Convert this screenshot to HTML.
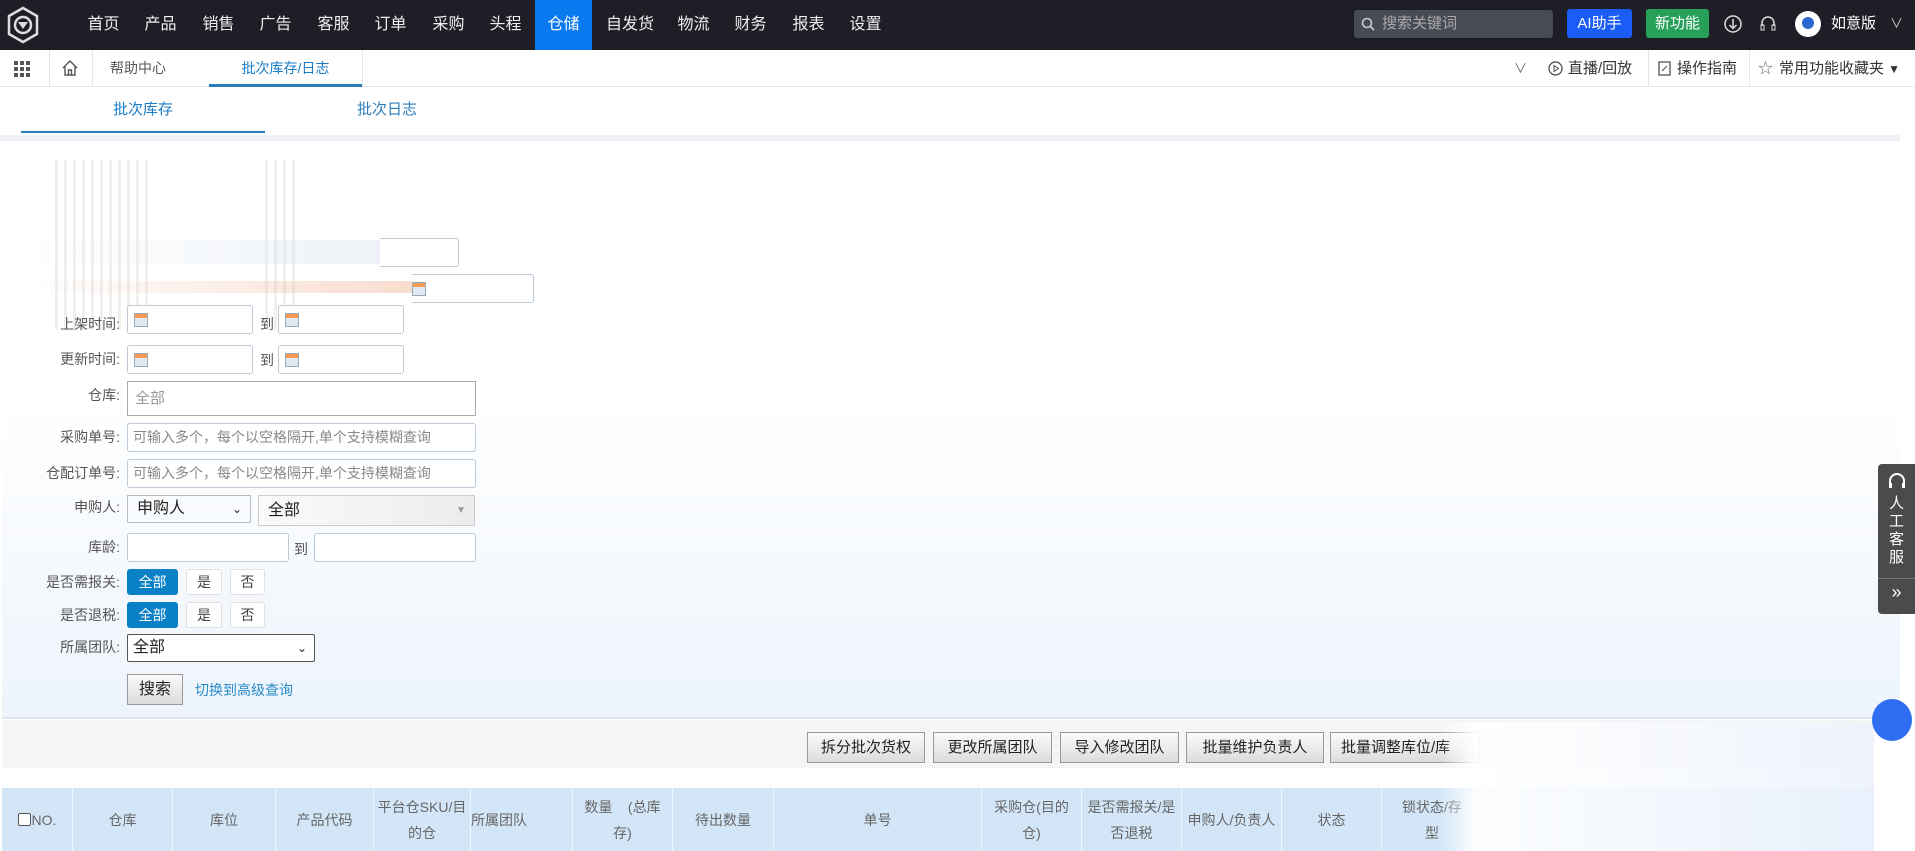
<!DOCTYPE html>
<html><head><meta charset="utf-8"><style>
*{box-sizing:border-box;margin:0;padding:0}
body{width:1915px;height:851px;overflow:hidden;position:relative;font-family:"Liberation Sans","Noto Sans CJK SC",sans-serif;background:#fff;color:#333}
.abs{position:absolute}
.top{left:0;top:0;width:1915px;height:50px;background:#1e1f26}
.nav{top:0;height:50px;line-height:50px;color:#eee;font-size:16px;text-align:center;width:57px}
.bar2{left:0;top:50px;width:1915px;height:37px;border-bottom:1px solid #e5e5e5;background:#fff;font-size:14px}
.lbl{font-size:14px;color:#555;text-align:right;width:120px;left:0}
.inp{border:1px solid #bcc9d6;border-radius:3px;background:#fff;height:29px}
.tb{border:1px solid #e0e0e0;border-radius:3px;height:26px;line-height:24px;text-align:center;font-size:14px;background:#fff;color:#444}
.tb.on{background:#0a81c7;color:#fff;border-color:#0a81c7}
.btn{height:31px;line-height:29px;border:1px solid #999;background:linear-gradient(#fafafa,#dcdcdc);font-size:15px;text-align:center;color:#222}
.th{top:788px;height:63px;background:#d3e6f8;border-right:1px solid #eef5fc;color:#666;font-size:14px;display:flex;align-items:center;justify-content:center;text-align:center;line-height:26px}
.cal{display:inline-block;width:14px;height:14px;border:1px solid #9ab;background:linear-gradient(#f59a55 0 35%,#dfe8f0 35%);margin:7px 0 0 6px}
</style></head><body>
<div class="abs top"></div>
<svg class="abs" style="left:6px;top:6px" width="34" height="38" viewBox="0 0 34 38"><path d="M17 2 L31 10 V28 L17 36 L3 28 V10 Z" fill="none" stroke="#ddd" stroke-width="2.5"/><circle cx="17" cy="19" r="8" fill="none" stroke="#ddd" stroke-width="2.5"/><path d="M12 16 L22 16 L17 23Z" fill="#ddd"/></svg>
<div class="abs nav" style="left:75px">首页</div>
<div class="abs nav" style="left:132px">产品</div>
<div class="abs nav" style="left:190px">销售</div>
<div class="abs nav" style="left:247px">广告</div>
<div class="abs nav" style="left:305px">客服</div>
<div class="abs nav" style="left:362px">订单</div>
<div class="abs nav" style="left:420px">采购</div>
<div class="abs nav" style="left:477px">头程</div>
<div class="abs nav" style="left:535px;background:#0a79f0;color:#fff">仓储</div>
<div class="abs nav" style="left:597px;width:66px">自发货</div>
<div class="abs nav" style="left:665px">物流</div>
<div class="abs nav" style="left:722px">财务</div>
<div class="abs nav" style="left:780px">报表</div>
<div class="abs nav" style="left:837px">设置</div>
<div class="abs" style="left:1354px;top:10px;width:199px;height:28px;background:#484b55;border-radius:3px;color:#aaa;font-size:15px;line-height:28px;padding-left:28px">搜索关键词</div>
<svg class="abs" style="left:1361px;top:17px" width="14" height="14"><circle cx="6" cy="6" r="4.5" fill="none" stroke="#ccc" stroke-width="1.6"/><path d="M9.5 9.5 L13 13" stroke="#ccc" stroke-width="1.6"/></svg>
<div class="abs" style="left:1567px;top:9px;width:65px;height:29px;background:#1a5cf5;border-radius:3px;color:#fff;font-size:15px;line-height:29px;text-align:center">AI助手</div>
<div class="abs" style="left:1646px;top:9px;width:63px;height:29px;background:#27a05a;border-radius:3px;color:#fff;font-size:15px;line-height:29px;text-align:center">新功能</div>
<svg class="abs" style="left:1723px;top:14px" width="20" height="20"><circle cx="10" cy="10" r="8" fill="none" stroke="#ddd" stroke-width="1.5"/><path d="M10 5V14M6.5 11L10 14.5L13.5 11" fill="none" stroke="#ddd" stroke-width="1.5"/></svg>
<svg class="abs" style="left:1758px;top:14px" width="20" height="20"><path d="M4 12V9a6 6 0 0 1 12 0v3" fill="none" stroke="#ddd" stroke-width="1.5"/><rect x="3" y="11" width="3" height="5" fill="none" stroke="#ddd"/><rect x="14" y="11" width="3" height="5" fill="none" stroke="#ddd"/></svg>
<div class="abs" style="left:1795px;top:11px;width:26px;height:26px;border-radius:50%;background:#fff"><div style="margin:6px auto;width:12px;height:12px;border-radius:50%;background:#2a6ad0"></div></div>
<div class="abs" style="left:1831px;top:0;line-height:47px;color:#fff;font-size:15px">如意版</div>
<div class="abs" style="left:1890px;top:0;line-height:47px;color:#ccc;font-size:13px">∨</div>

<div class="abs bar2"></div>
<svg class="abs" style="left:14px;top:61px" width="16" height="16"><g fill="#555"><rect x="0" y="0" width="4" height="4"/><rect x="6" y="0" width="4" height="4"/><rect x="12" y="0" width="4" height="4"/><rect x="0" y="6" width="4" height="4"/><rect x="6" y="6" width="4" height="4"/><rect x="12" y="6" width="4" height="4"/><rect x="0" y="12" width="4" height="4"/><rect x="6" y="12" width="4" height="4"/><rect x="12" y="12" width="4" height="4"/></g></svg>
<div class="abs" style="left:49px;top:50px;width:1px;height:37px;background:#e5e5e5"></div>
<svg class="abs" style="left:61px;top:59px" width="18" height="18"><path d="M2 9L9 2L16 9M4 7V16H14V7M7.5 16V11H10.5V16" fill="none" stroke="#555" stroke-width="1.4"/></svg>
<div class="abs" style="left:92px;top:50px;width:1px;height:37px;background:#e5e5e5"></div>
<div class="abs" style="left:110px;top:50px;line-height:37px;font-size:14px;color:#555">帮助中心</div>
<div class="abs" style="left:209px;top:50px;width:153px;height:37px;line-height:37px;font-size:14px;color:#1a7dc8;text-align:center;border-bottom:3px solid #2a7db8">批次库存/日志</div>
<div class="abs" style="left:362px;top:50px;width:1px;height:37px;background:#e5e5e5"></div>
<div class="abs" style="left:1514px;top:50px;line-height:37px;font-size:13px;color:#666">∨</div>
<svg class="abs" style="left:1548px;top:61px" width="15" height="15"><circle cx="7.5" cy="7.5" r="6.5" fill="none" stroke="#444" stroke-width="1.2"/><path d="M6 4.5L10.5 7.5L6 10.5Z" fill="none" stroke="#444"/></svg>
<div class="abs" style="left:1568px;top:50px;line-height:37px;font-size:15px;color:#333">直播/回放</div>
<div class="abs" style="left:1648px;top:50px;width:1px;height:37px;background:#e5e5e5"></div>
<svg class="abs" style="left:1658px;top:61px" width="13" height="15"><rect x="1" y="1" width="11" height="13" fill="none" stroke="#444" stroke-width="1.2"/><path d="M4 10L9 5" stroke="#444"/></svg>
<div class="abs" style="left:1677px;top:50px;line-height:37px;font-size:15px;color:#333">操作指南</div>
<div class="abs" style="left:1749px;top:50px;width:1px;height:37px;background:#e5e5e5"></div>
<div class="abs" style="left:1758px;top:50px;line-height:37px;font-size:15px;color:#666">☆</div>
<div class="abs" style="left:1779px;top:50px;line-height:37px;font-size:15px;color:#333">常用功能收藏夹 <span style="font-size:12px">▼</span></div>

<div class="abs" style="left:21px;top:87px;width:244px;height:46px;line-height:46px;text-align:center;color:#1a7dc8;font-size:15px;border-bottom:2px solid #2a7db8">批次库存</div>
<div class="abs" style="left:290px;top:87px;width:194px;height:46px;line-height:46px;text-align:center;color:#2a7db8;font-size:15px">批次日志</div>
<div class="abs" style="left:0;top:135px;width:1900px;height:6px;background:#eef2f7"></div>

<div class="abs" style="left:2px;top:141px;width:1898px;height:576px;background:linear-gradient(#fff 0%,#fff 45%,#edf4fc 100%)"></div>
<div class="abs" style="left:2px;top:717px;width:1898px;height:2px;background:#dde6ee"></div>

<div class="abs" style="left:55px;top:160px;width:95px;height:170px;background:repeating-linear-gradient(90deg,rgba(150,150,150,.15) 0 3px,transparent 3px 9px)"></div>
<div class="abs" style="left:265px;top:160px;width:30px;height:170px;background:repeating-linear-gradient(90deg,rgba(150,150,150,.15) 0 3px,transparent 3px 9px)"></div>
<div class="abs inp" style="left:380px;top:238px;width:79px;height:29px;border-left:none;border-radius:0 3px 3px 0"></div>
<div class="abs" style="left:30px;top:240px;width:350px;height:24px;background:linear-gradient(90deg,transparent,rgba(220,230,240,.5))"></div>
<div class="abs inp" style="left:412px;top:274px;width:122px;height:29px;border-left:none;border-radius:0 3px 3px 0"><span class="cal" style="margin-left:0"></span></div>
<div class="abs" style="left:30px;top:281px;width:382px;height:12px;background:linear-gradient(90deg,transparent,rgba(240,180,150,.45))"></div>

<div class="abs lbl" style="top:314px">上架时间:</div>
<div class="abs inp" style="left:127px;top:305px;width:126px"><span class="cal"></span></div>
<div class="abs" style="left:260px;top:314px;font-size:14px;color:#555">到</div>
<div class="abs inp" style="left:278px;top:305px;width:126px"><span class="cal"></span></div>

<div class="abs lbl" style="top:349px">更新时间:</div>
<div class="abs inp" style="left:127px;top:345px;width:126px"><span class="cal"></span></div>
<div class="abs" style="left:260px;top:350px;font-size:14px;color:#555">到</div>
<div class="abs inp" style="left:278px;top:345px;width:126px"><span class="cal"></span></div>

<div class="abs lbl" style="top:385px">仓库:</div>
<div class="abs inp" style="left:127px;top:381px;width:349px;height:35px;border-color:#aaa;border-radius:0;line-height:33px;padding-left:7px;color:#999;font-size:15px">全部</div>

<div class="abs lbl" style="top:427px">采购单号:</div>
<div class="abs inp" style="left:127px;top:423px;width:349px;line-height:27px;padding-left:5px;color:#888;font-size:14px">可输入多个，每个以空格隔开,单个支持模糊查询</div>
<div class="abs lbl" style="top:463px">仓配订单号:</div>
<div class="abs inp" style="left:127px;top:459px;width:349px;line-height:27px;padding-left:5px;color:#888;font-size:14px">可输入多个，每个以空格隔开,单个支持模糊查询</div>

<div class="abs lbl" style="top:497px">申购人:</div>
<div class="abs" style="left:127px;top:495px;width:124px;height:28px;border:1px solid #bbb;line-height:26px;padding-left:9px;font-size:16px;color:#222">申购人<span style="position:absolute;right:8px;font-size:12px">⌄</span></div>
<div class="abs" style="left:258px;top:495px;width:217px;height:31px;border:1px solid #ccc;background:linear-gradient(90deg,#fafafa,#ececec);line-height:29px;padding-left:9px;font-size:16px;color:#222">全部<span style="position:absolute;right:8px;font-size:10px;color:#999">▼</span></div>

<div class="abs lbl" style="top:537px">库龄:</div>
<div class="abs inp" style="left:127px;top:533px;width:162px"></div>
<div class="abs" style="left:294px;top:539px;font-size:14px;color:#555">到</div>
<div class="abs inp" style="left:314px;top:533px;width:162px"></div>

<div class="abs lbl" style="top:572px">是否需报关:</div>
<div class="abs tb on" style="left:127px;top:569px;width:51px">全部</div>
<div class="abs tb" style="left:186px;top:569px;width:36px">是</div>
<div class="abs tb" style="left:230px;top:569px;width:35px">否</div>
<div class="abs lbl" style="top:605px">是否退税:</div>
<div class="abs tb on" style="left:127px;top:602px;width:51px">全部</div>
<div class="abs tb" style="left:186px;top:602px;width:36px">是</div>
<div class="abs tb" style="left:230px;top:602px;width:35px">否</div>

<div class="abs lbl" style="top:637px">所属团队:</div>
<div class="abs" style="left:127px;top:634px;width:188px;height:28px;border:1px solid #555;border-radius:2px;background:#fff;line-height:26px;padding-left:5px;font-size:16px;color:#222">全部<span style="position:absolute;right:7px;font-size:12px">⌄</span></div>

<div class="abs btn" style="left:127px;top:674px;width:56px;font-size:16px">搜索</div>
<div class="abs" style="left:195px;top:680px;font-size:14px;color:#2a8ac8">切换到高级查询</div>

<div class="abs" style="left:2px;top:720px;width:1898px;height:48px;background:#f5f5f5"></div>
<div class="abs btn" style="left:807px;top:732px;width:118px">拆分批次货权</div>
<div class="abs btn" style="left:933px;top:732px;width:119px">更改所属团队</div>
<div class="abs btn" style="left:1060px;top:732px;width:119px">导入修改团队</div>
<div class="abs btn" style="left:1186px;top:732px;width:138px">批量维护负责人</div>
<div class="abs btn" style="left:1330px;top:732px;width:150px;text-align:left;padding-left:10px">批量调整库位/库</div>

<div class="abs th" style="left:2px;width:71px"><span style="display:inline-block;width:13px;height:13px;border:1px solid #555;border-radius:2px;background:#fff;margin-right:1px"></span>NO.</div>
<div class="abs th" style="left:73px;width:100px">仓库</div>
<div class="abs th" style="left:173px;width:103px">库位</div>
<div class="abs th" style="left:276px;width:98px">产品代码</div>
<div class="abs th" style="left:374px;width:97px">平台仓SKU/目<br>的仓</div>
<div class="abs th" style="left:471px;width:102px;justify-content:flex-start">所属团队</div>
<div class="abs th" style="left:573px;width:100px">数量 &nbsp; &nbsp;(总库<br>存)</div>
<div class="abs th" style="left:673px;width:101px">待出数量</div>
<div class="abs th" style="left:774px;width:208px">单号</div>
<div class="abs th" style="left:982px;width:100px">采购仓(目的<br>仓)</div>
<div class="abs th" style="left:1082px;width:100px">是否需报关/是<br>否退税</div>
<div class="abs th" style="left:1182px;width:100px">申购人/负责人</div>
<div class="abs th" style="left:1282px;width:100px">状态</div>
<div class="abs th" style="left:1382px;width:101px">锁状态/存<br>型</div>
<div class="abs th" style="left:1483px;width:400px"></div>

<div class="abs" style="left:1440px;top:722px;width:440px;height:129px;background:linear-gradient(90deg,rgba(255,255,255,0),rgba(255,255,255,.92) 8%,rgba(236,242,252,.85) 100%)"></div>
<div class="abs" style="left:1874px;top:722px;width:41px;height:129px;background:#fff"></div>
<div class="abs" style="left:1872px;top:699px;width:40px;height:42px;border-radius:50%;background:#2f6ef0"></div>

<div class="abs" style="left:1878px;top:464px;width:37px;height:150px;background:#4b4b4b;border-radius:4px 0 0 4px"></div>
<svg class="abs" style="left:1887px;top:472px" width="20" height="20"><path d="M3 12V9a7 7 0 0 1 14 0v3" fill="none" stroke="#fff" stroke-width="2"/><rect x="2" y="11" width="3" height="5" fill="#fff"/><rect x="15" y="11" width="3" height="5" fill="#fff"/></svg>
<div class="abs" style="left:1878px;top:495px;width:37px;text-align:center;color:#fff;font-size:15px;line-height:18px">人<br>工<br>客<br>服</div>
<div class="abs" style="left:1878px;top:578px;width:37px;height:1px;background:#777"></div>
<div class="abs" style="left:1878px;top:582px;width:37px;text-align:center;color:#fff;font-size:18px">»</div>
</body></html>
